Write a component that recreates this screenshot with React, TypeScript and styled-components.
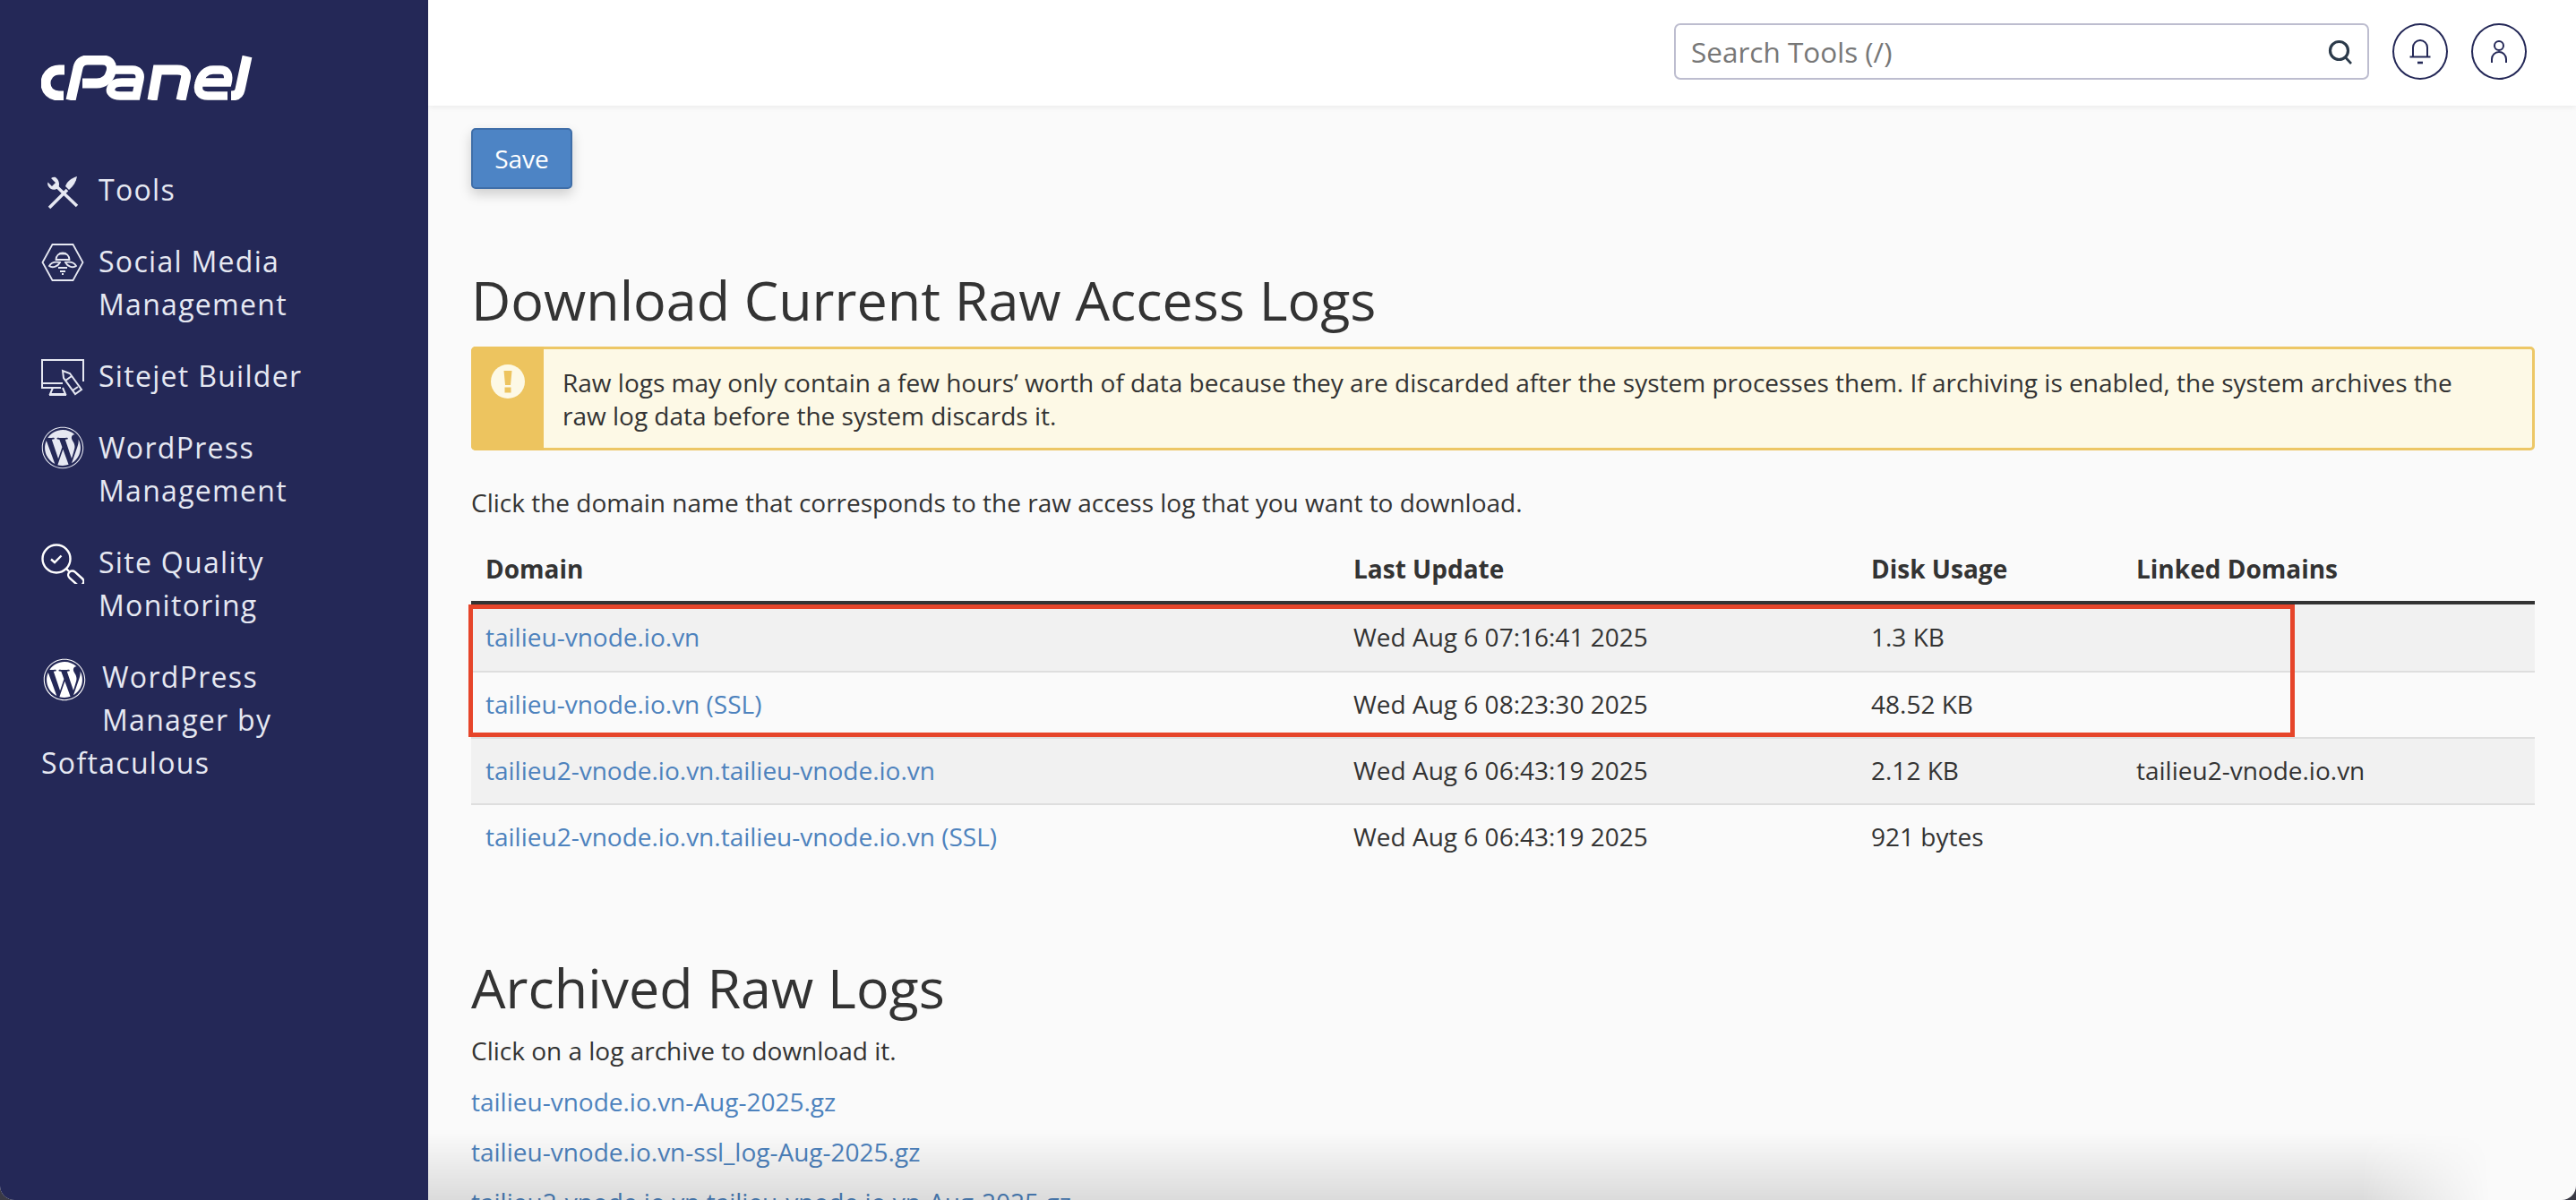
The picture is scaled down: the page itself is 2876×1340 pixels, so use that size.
import React, { FC } from 'react';
import styled, { createGlobalStyle } from 'styled-components';
import { FaWordpress } from 'react-icons/fa';

const GlobalStyle = createGlobalStyle`
  html, body {
    margin: 0;
    padding: 0;
    background: #3a3a45;
  }
  * {
    box-sizing: border-box;
  }
`;

const Frame = styled.div`
  display: flex;
  width: 2876px;
  height: 1340px;
  overflow: hidden;
  border-radius: 0 0 16px 16px;
  font-family: 'Open Sans', 'Noto Sans', sans-serif;
  color: #333;
  background: #fafafa;
`;

const Sidebar = styled.aside`
  flex: 0 0 478px;
  padding: 62px 46px 0;
  background: #242857;
  color: #e6e8f2;
`;

const LogoWrap = styled.div`
  height: 50px;
  margin-bottom: 76px;
`;

const Nav = styled.nav`
  display: flex;
  flex-direction: column;
  gap: 32px;
`;

const NavItem = styled.a`
  display: flex;
  gap: 16px;
  font-size: 32px;
  line-height: 48px;
  letter-spacing: 1.3px;
`;

const FloatNavItem = styled.a`
  display: block;
  font-size: 32px;
  line-height: 48px;
  letter-spacing: 1.3px;
`;

const NavIcon = styled.span`
  flex: 0 0 48px;
  width: 48px;
  height: 48px;
  display: flex;
  color: #e6e8f2;
`;

const FloatIcon = styled.span`
  float: left;
  width: 48px;
  height: 48px;
  margin: 3px 18px 0 2px;
  display: flex;
  color: #fff;
`;

const Main = styled.div`
  position: relative;
  flex: 1;
  min-width: 0;
  display: flex;
  flex-direction: column;
`;

const TopBar = styled.header`
  flex: 0 0 118px;
  display: flex;
  justify-content: flex-end;
  align-items: flex-start;
  gap: 26px;
  padding: 26px 55px 0 0;
  background: #fff;
  box-shadow: 0 2px 6px rgba(0, 0, 0, 0.06);
  z-index: 1;
`;

const SearchBox = styled.div`
  display: flex;
  align-items: center;
  width: 776px;
  height: 63px;
  padding: 0 16px 0 17px;
  border: 2px solid #bdbdcf;
  border-radius: 7px;
  background: #fff;
`;

const SearchInput = styled.input`
  flex: 1;
  min-width: 0;
  border: 0;
  outline: 0;
  padding: 0;
  background: transparent;
  font-family: inherit;
  font-size: 31.5px;
  color: #777;
  &::placeholder {
    color: #777;
    opacity: 1;
  }
`;

const RoundButton = styled.button`
  width: 62px;
  height: 63px;
  padding: 0;
  display: flex;
  align-items: center;
  justify-content: center;
  border: 2px solid #242857;
  border-radius: 50%;
  background: #fff;
  color: #242857;
`;

const Content = styled.main`
  flex: 1;
  min-height: 0;
  overflow: hidden;
  padding: 25px 46px 0 48px;
`;

const SaveButton = styled.button`
  display: block;
  width: 113px;
  height: 68px;
  padding: 0;
  border: 2px solid #3f6ea8;
  border-radius: 5px;
  background: #4d84c5;
  color: #fff;
  font-family: inherit;
  font-size: 28px;
  box-shadow: 0 6px 14px rgba(0, 0, 0, 0.18);
`;

const Heading = styled.h1`
  margin: 87px 0 0;
  font-size: 61px;
  line-height: 73px;
  font-weight: 500;
  color: #333;
`;

const ArchiveHeading = styled(Heading)`
  margin-top: 95px;
`;

const Alert = styled.div`
  display: flex;
  margin-top: 16px;
  height: 116px;
  border: 3px solid #edc766;
  border-radius: 5px;
  background: #fdf9e6;
`;

const AlertBand = styled.div`
  flex: 0 0 81px;
  margin: -3px 0 -3px -3px;
  padding: 20px 0 0 22px;
  border-radius: 5px 0 0 5px;
  background: #edc45f;
`;

const AlertDot = styled.div`
  width: 38px;
  height: 38px;
  display: flex;
  align-items: center;
  justify-content: center;
  border-radius: 50%;
  background: #fdf9e6;
`;

const AlertText = styled.p`
  margin: 0;
  padding: 19px 60px 0 21px;
  font-size: 28px;
  line-height: 37px;
`;

const Intro = styled.p`
  margin: 38px 0 0;
  font-size: 28px;
  line-height: 40px;
`;

const TableWrap = styled.div`
  position: relative;
  margin-top: 18px;
`;

const LogTable = styled.table`
  width: 100%;
  table-layout: fixed;
  border-collapse: separate;
  border-spacing: 0;
  font-size: 28px;
`;

const HeadCell = styled.th`
  height: 76px;
  padding: 0 16px;
  text-align: left;
  font-weight: 700;
  border-bottom: 4px solid #333;
`;

const Row = styled.tr<{ $striped: boolean }>`
  background: ${(p) => (p.$striped ? '#f1f1f1' : '#fafafa')};
`;

const Cell = styled.td<{ $first: boolean }>`
  height: 74px;
  padding: 0 16px 2px;
  vertical-align: middle;
  border-top: ${(p) => (p.$first ? '0' : '2px solid #dedede')};
`;

const Link = styled.a`
  color: #4d82bd;
  text-decoration: none;
`;

const Highlight = styled.div`
  position: absolute;
  top: 76px;
  left: -3px;
  width: 2039px;
  height: 148px;
  border: 5px solid #e6452a;
  pointer-events: none;
`;

const ArchiveIntro = styled.p`
  margin: 14px 0 0;
  font-size: 28px;
  line-height: 40px;
`;

const ArchiveList = styled.div`
  display: flex;
  flex-direction: column;
  gap: 16px;
  margin-top: 17px;
  font-size: 28px;
  line-height: 40px;
`;

const BottomShade = styled.div`
  position: absolute;
  left: 0;
  right: 0;
  bottom: 0;
  height: 75px;
  background: linear-gradient(to bottom, rgba(0, 0, 0, 0), rgba(0, 0, 0, 0.12));
  mask-image: linear-gradient(to right, #000 90%, transparent 96%);
  pointer-events: none;
`;

const CPanelLogo: FC = () => (
  <svg width="240" height="50" viewBox="0 0 240 50" fill="none" stroke="#fff" strokeWidth="11">
    <path d="M26 16 H20 C10 16 5 24 5 31 C5 39 11 45 20 45 H25" />
    <path d="M33 50 L41 14 C42 8 46 5 52 5 H68 C76 5 80 10 78 18 C76 26 70 31 62 31 H46" />
    <path d="M76 16 H102 C108 16 111 20 110 26 L106 45 H88 C80 45 76 41 78 36 C80 31 84 30 90 30 H106" strokeWidth="9.5" />
    <path d="M124 50 L130 16 H152 C160 16 163 20 161 27 L156 50" />
    <path d="M208 45 H186 C178 45 174 40 176 32 C178 22 184 16 192 16 H200 C208 16 210 22 208 30 H178" strokeWidth="9.5" />
    <path d="M230 1 L222 38 C221 43 218 45 212 45" />
  </svg>
);

const ToolsIcon: FC = () => (
  <svg width="48" height="48" viewBox="0 0 48 48" fill="currentColor">
    <path d="M16 10 C20 13 21 18 19 22 C15 25 10 24 8 20 C7 18 7 17 7.5 15.5 L12 20 L16 16 L11 11 C12.5 10 14.5 9.5 16 10 Z" />
    <path d="M18 21 L40 42" fill="none" stroke="currentColor" strokeWidth="3.5" />
    <path d="M9 44 L29 24" fill="none" stroke="currentColor" strokeWidth="3.5" />
    <path d="M27 20 C29 14 34 11 40 9 C39 15 36 20 31 24 Z" />
  </svg>
);

const SocialIcon: FC = () => (
  <svg width="48" height="48" viewBox="0 0 48 48" fill="none" stroke="currentColor" strokeWidth="1.8">
    <path d="M1.5 25 L12.5 5 H35.5 L46.5 25 L35.5 45 H12.5 Z" />
    <path d="M16.5 22 A7.5 7.5 0 0 1 31.5 22 Z" />
    <path d="M20 15.5 H28" />
    <path d="M9 29 C11 25 16 24 21 25 C19 29 13 32 9 29 Z" />
    <path d="M39 29 C37 25 32 24 27 25 C29 29 35 32 39 29 Z" />
    <path d="M19 31 H29 M21 35 H27 M23 38 H25" />
  </svg>
);

const SitejetIcon: FC = () => (
  <svg width="48" height="48" viewBox="0 0 48 48" fill="none" stroke="currentColor" strokeWidth="2">
    <path d="M47 30 V6 H1 V37 H22" />
    <path d="M1 32 H24" />
    <path d="M13 37 L10 44 H27 L24 37 M9 45 H28" />
    <path d="M24 18 L25 26 L38 44 L45 39 L32 21 Z" />
    <path d="M27 29 L34 24 M35 40 L41 36" />
  </svg>
);

const QualityIcon: FC = () => (
  <svg width="48" height="48" viewBox="0 0 48 48" fill="none" stroke="#fff" strokeWidth="2.4">
    <circle cx="17" cy="20" r="15.5" />
    <path d="M11 20.5 L15 24 L22.5 16.5" />
    <path d="M28 31 L31 34" />
    <rect x="-9" y="-4.5" width="20" height="9" rx="4.5" transform="translate(38 41) rotate(42)" />
  </svg>
);

const SearchIcon: FC = () => (
  <svg width="28" height="28" viewBox="0 0 28 28" fill="none" stroke="#2b3a4a" strokeWidth="3.2">
    <circle cx="12.5" cy="12.5" r="10" />
    <path d="M19.5 20 L26 27" strokeWidth="2.6" />
  </svg>
);

const BellIcon: FC = () => (
  <svg width="26" height="28" viewBox="0 0 26 28" fill="none" stroke="currentColor" strokeWidth="2">
    <path d="M5 19 V9 A8 8 0 0 1 21 9 V19" />
    <path d="M1.5 19.5 H24.5" />
    <path d="M10 26 H16" strokeWidth="2.6" />
  </svg>
);

const UserIcon: FC = () => (
  <svg width="22" height="28" viewBox="0 0 22 28" fill="none" stroke="currentColor" strokeWidth="2">
    <circle cx="11" cy="7" r="5" />
    <path d="M3 26 V22 A8 8 0 0 1 19 22 V26" />
  </svg>
);

const WarnMark: FC = () => (
  <svg width="12" height="26" viewBox="0 0 12 26" fill="#edc45f">
    <path d="M1.5 1 H10.5 L9 17 H3 Z" />
    <rect x="2.5" y="19.5" width="7" height="6" />
  </svg>
);

const rows = [
  { domain: 'tailieu-vnode.io.vn', update: 'Wed Aug 6 07:16:41 2025', usage: '1.3 KB', linked: '' },
  { domain: 'tailieu-vnode.io.vn (SSL)', update: 'Wed Aug 6 08:23:30 2025', usage: '48.52 KB', linked: '' },
  {
    domain: 'tailieu2-vnode.io.vn.tailieu-vnode.io.vn',
    update: 'Wed Aug 6 06:43:19 2025',
    usage: '2.12 KB',
    linked: 'tailieu2-vnode.io.vn',
  },
  {
    domain: 'tailieu2-vnode.io.vn.tailieu-vnode.io.vn (SSL)',
    update: 'Wed Aug 6 06:43:19 2025',
    usage: '921 bytes',
    linked: '',
  },
];

const archives = [
  'tailieu-vnode.io.vn-Aug-2025.gz',
  'tailieu-vnode.io.vn-ssl_log-Aug-2025.gz',
  'tailieu2-vnode.io.vn.tailieu-vnode.io.vn-Aug-2025.gz',
];

const App: FC = () => (
  <>
    <GlobalStyle />
    <Frame>
      <Sidebar>
        <LogoWrap>
          <CPanelLogo />
        </LogoWrap>
        <Nav>
          <NavItem>
            <NavIcon>
              <ToolsIcon />
            </NavIcon>
            <span>Tools</span>
          </NavItem>
          <NavItem>
            <NavIcon>
              <SocialIcon />
            </NavIcon>
            <span>
              Social Media
              <br />
              Management
            </span>
          </NavItem>
          <NavItem>
            <NavIcon>
              <SitejetIcon />
            </NavIcon>
            <span>Sitejet Builder</span>
          </NavItem>
          <NavItem>
            <NavIcon>
              <FaWordpress size={48} />
            </NavIcon>
            <span>
              WordPress
              <br />
              Management
            </span>
          </NavItem>
          <NavItem>
            <NavIcon>
              <QualityIcon />
            </NavIcon>
            <span>
              Site Quality
              <br />
              Monitoring
            </span>
          </NavItem>
          <FloatNavItem>
            <FloatIcon>
              <FaWordpress size={48} />
            </FloatIcon>
            WordPress
            <br />
            Manager by
            <br />
            Softaculous
          </FloatNavItem>
        </Nav>
      </Sidebar>
      <Main>
        <TopBar>
          <SearchBox>
            <SearchInput placeholder="Search Tools (/)" />
            <SearchIcon />
          </SearchBox>
          <RoundButton type="button" aria-label="Notifications">
            <BellIcon />
          </RoundButton>
          <RoundButton type="button" aria-label="User">
            <UserIcon />
          </RoundButton>
        </TopBar>
        <Content>
          <SaveButton type="button">Save</SaveButton>
          <Heading>Download Current Raw Access Logs</Heading>
          <Alert>
            <AlertBand>
              <AlertDot>
                <WarnMark />
              </AlertDot>
            </AlertBand>
            <AlertText>
              Raw logs may only contain a few hours’ worth of data because they are discarded after the system
              processes them. If archiving is enabled, the system archives the raw log data before the system
              discards it.
            </AlertText>
          </Alert>
          <Intro>Click the domain name that corresponds to the raw access log that you want to download.</Intro>
          <TableWrap>
            <LogTable>
              <colgroup>
                <col style={{ width: 969 }} />
                <col style={{ width: 578 }} />
                <col style={{ width: 296 }} />
                <col />
              </colgroup>
              <thead>
                <tr>
                  <HeadCell>Domain</HeadCell>
                  <HeadCell>Last Update</HeadCell>
                  <HeadCell>Disk Usage</HeadCell>
                  <HeadCell>Linked Domains</HeadCell>
                </tr>
              </thead>
              <tbody>
                {rows.map((row, i) => (
                  <Row key={row.domain} $striped={i % 2 === 0}>
                    <Cell $first={i === 0}>
                      <Link>{row.domain}</Link>
                    </Cell>
                    <Cell $first={i === 0}>{row.update}</Cell>
                    <Cell $first={i === 0}>{row.usage}</Cell>
                    <Cell $first={i === 0}>{row.linked}</Cell>
                  </Row>
                ))}
              </tbody>
            </LogTable>
            <Highlight />
          </TableWrap>
          <ArchiveHeading as="h2">Archived Raw Logs</ArchiveHeading>
          <ArchiveIntro>Click on a log archive to download it.</ArchiveIntro>
          <ArchiveList>
            {archives.map((name) => (
              <Link key={name}>{name}</Link>
            ))}
          </ArchiveList>
        </Content>
        <BottomShade />
      </Main>
    </Frame>
  </>
);

export default App;
